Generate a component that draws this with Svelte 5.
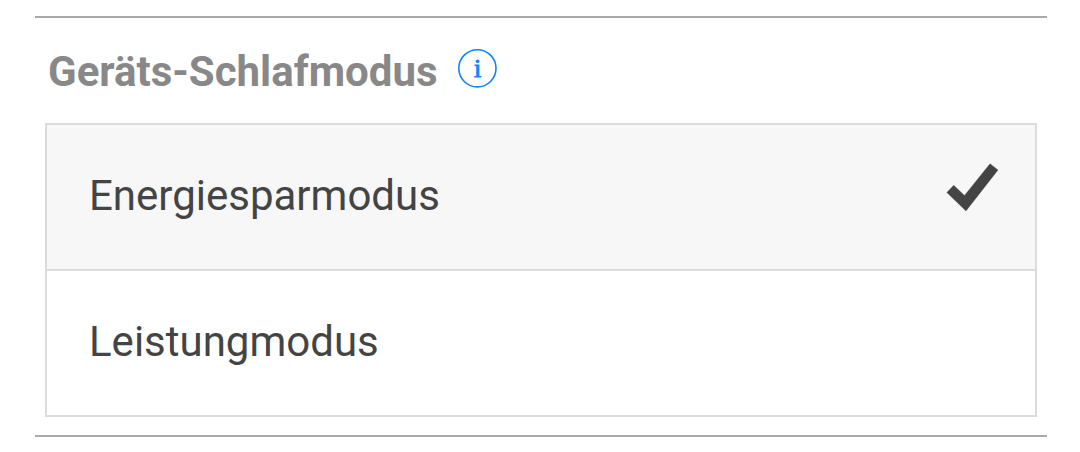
<script>
  let selected = $state("energy");

  const options = [
    { id: "energy", label: "Energiesparmodus" },
    { id: "performance", label: "Leistungmodus" },
  ];
</script>

<section class="sleep-mode">
  <header>
    <h2>Geräts-Schlafmodus</h2>
    <button class="info" aria-label="Info">
      <svg width="40" height="40" viewBox="0 0 40 40">
        <circle cx="19.4" cy="20.3" r="18.6" />
        <text x="19.6" y="28.6" text-anchor="middle">i</text>
      </svg>
    </button>
  </header>
  <div class="options">
    {#each options as option (option.id)}
      <button
        class="option"
        class:selected={selected === option.id}
        onclick={() => (selected = option.id)}
      >
        <span>{option.label}</span>
        {#if selected === option.id}
          <svg class="check" width="52" height="48" viewBox="0 0 52 48">
            <path
              d="M.8 29.4 7.7 22.2 18.5 32.4 44 .7 52 7 20 48Z"
              stroke-linejoin="round"
            />
          </svg>
        {/if}
      </button>
    {/each}
  </div>
</section>

<style>
  :global(body) {
    background: #fff;
  }

  .sleep-mode {
    box-sizing: border-box;
    height: 421px;
    margin: 16px 33px 0 35px;
    padding: 0 10px;
    border-top: 2px solid #a9a9a9;
    border-bottom: 2px solid #a9a9a9;
    font-family: Roboto, sans-serif;
  }

  header {
    display: flex;
    align-items: flex-start;
    gap: 20px;
    height: 105px;
    padding-left: 3px;
  }

  h2 {
    margin: 29px 0 0;
    color: #888;
    font-size: 42px;
    font-weight: 700;
    line-height: 50px;
  }

  button {
    border: 0;
    background: none;
    font: inherit;
    text-align: left;
    cursor: pointer;
  }

  .info {
    margin-top: 30px;
    padding: 0;
  }

  .info svg,
  .check {
    display: block;
  }

  circle {
    fill: none;
    stroke: #0a84ff;
    stroke-width: 1.6;
  }

  text {
    fill: #0a84ff;
    stroke: #0a84ff;
    stroke-width: 0.9;
    font-family: "Liberation Serif", serif;
    font-size: 26px;
  }

  .options {
    border: 2px solid #dcdcdc;
  }

  .option {
    display: flex;
    box-sizing: border-box;
    justify-content: space-between;
    align-items: flex-start;
    width: 100%;
    height: 144px;
    padding: 46px 37px 0 42px;
    color: #444;
    font-size: 42px;
    line-height: 50px;
  }

  .option + .option {
    height: 146px;
    border-top: 2px solid #dcdcdc;
  }

  .selected {
    background: #f7f7f7;
  }

  .check {
    margin-top: -8px;
    fill: #444;
    stroke: #444;
    stroke-width: 0.3;
  }
</style>
